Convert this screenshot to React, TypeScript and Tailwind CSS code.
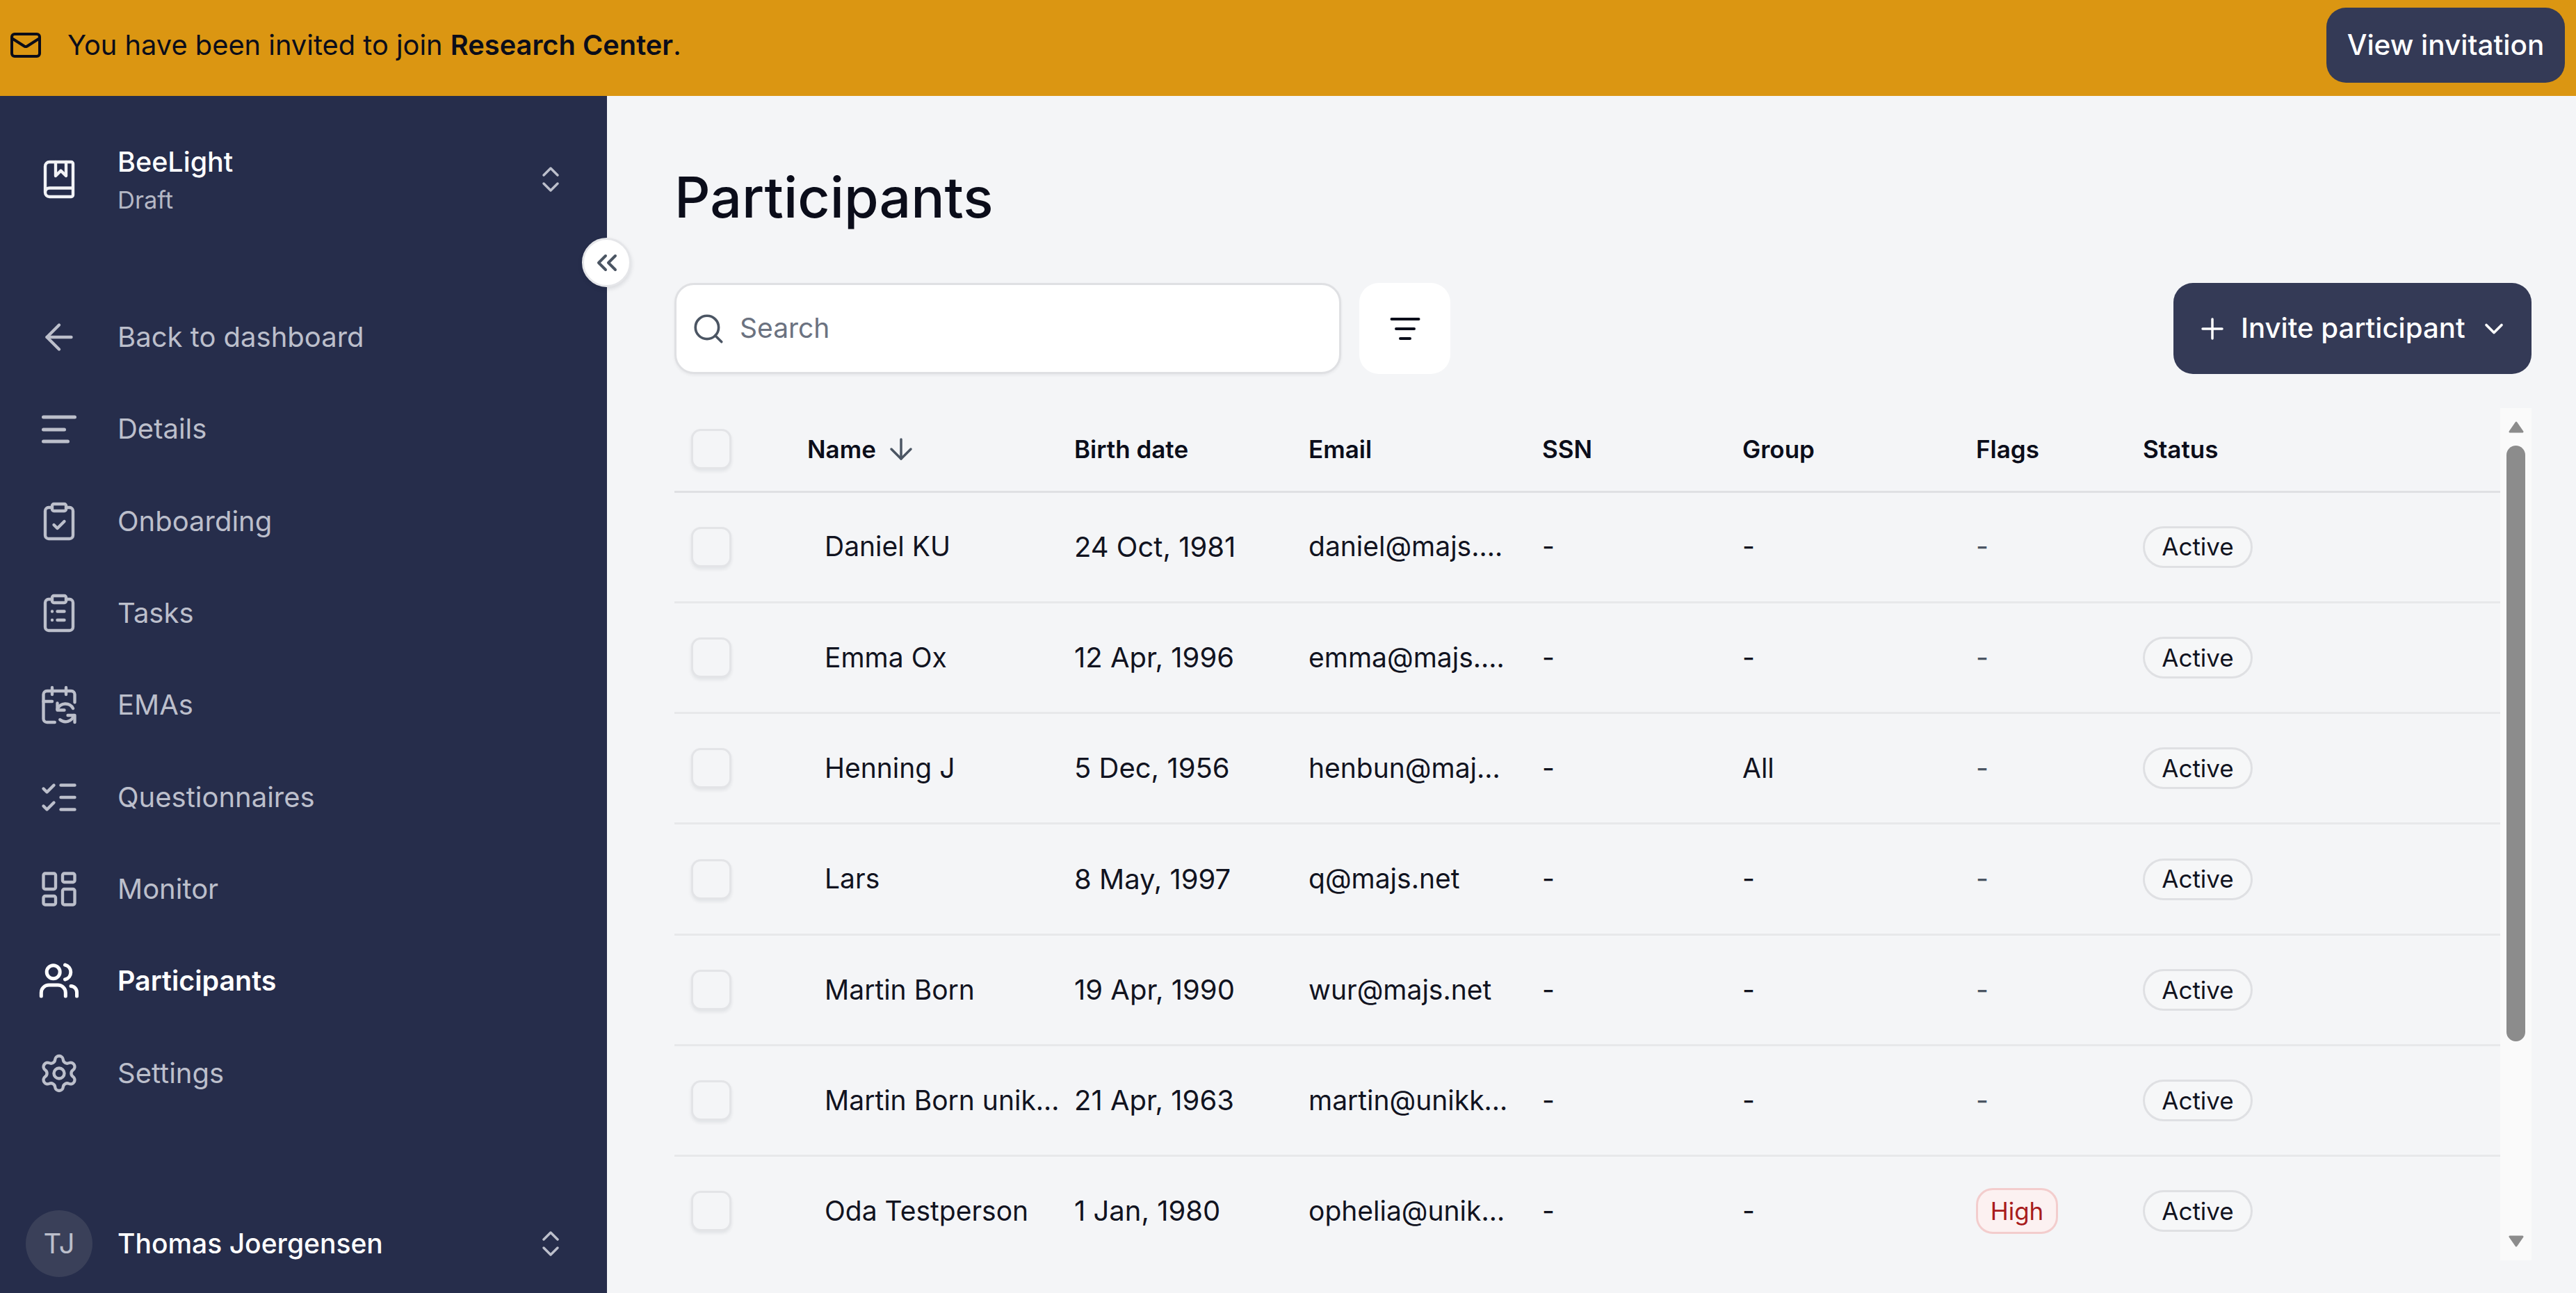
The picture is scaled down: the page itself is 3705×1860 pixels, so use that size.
import {
  ArrowDown,
  ArrowLeft,
  BookMarked,
  ChevronDown,
  ChevronsLeft,
  ChevronsUpDown,
  ClipboardCheck,
  LayoutDashboard,
  ListChecks,
  Mail,
  Plus,
  Search,
  Settings,
} from "lucide-react";
import type { ReactNode } from "react";

const iconClass = "h-[60px] w-[60px] shrink-0";

function DetailsIcon() {
  return (
    <svg viewBox="0 0 60 60" className={iconClass} fill="none" stroke="currentColor" strokeWidth="5" strokeLinecap="round">
      <path d="M7.500 13h45M7.500 31h30M7.500 48h35" />
    </svg>
  );
}

function TasksIcon() {
  return (
    <svg viewBox="0 0 24 24" className={iconClass} fill="none" stroke="currentColor" strokeWidth="1.75" strokeLinecap="round" strokeLinejoin="round">
      <rect x="8" y="2" width="8" height="4" rx="1" />
      <path d="M16 4h2a2 2 0 0 1 2 2v14a2 2 0 0 1-2 2H6a2 2 0 0 1-2-2V6a2 2 0 0 1 2-2h2" />
      <path d="M11 11h4M11 16h4M8 11h.01M8 16h.01" />
    </svg>
  );
}

function EmaIcon() {
  return (
    <svg viewBox="0 0 24 24" className={iconClass} fill="none" stroke="currentColor" strokeWidth="1.75" strokeLinecap="round" strokeLinejoin="round">
      <path d="M8 2v4M16 2v4M3 10h5" />
      <path d="M21 10.500V6a2 2 0 0 0-2-2H5a2 2 0 0 0-2 2v14a2 2 0 0 0 2 2h4.500" />
      <path d="M11 14.500a5 5 0 0 1 9-.5M21 22v-4h-4" />
      <path d="M20.500 18a5 5 0 0 1-8 2.500" />
      <path d="M11 11v4h4" />
    </svg>
  );
}

function PeopleIcon() {
  return (
    <svg viewBox="15 21 60 60" className={iconClass} fill="none" stroke="currentColor" strokeWidth="5" strokeLinecap="round" strokeLinejoin="round">
      <circle cx="36.700" cy="38.300" r="9.500" />
      <path d="M53.500 28a10.800 10.800 0 0 1 0 21" />
      <path d="M19.300 73v-5a11 11 0 0 1 11-11h13a11 11 0 0 1 11 11v5" />
      <path d="M62 58.500a9 9 0 0 1 8.500 9V73" />
    </svg>
  );
}

const navItems: { label: string; icon: ReactNode; active?: boolean }[] = [
  { label: "Back to dashboard", icon: <ArrowLeft className={iconClass} strokeWidth={1.75} /> },
  { label: "Details", icon: <DetailsIcon /> },
  { label: "Onboarding", icon: <ClipboardCheck className={iconClass} strokeWidth={1.75} /> },
  { label: "Tasks", icon: <TasksIcon /> },
  { label: "EMAs", icon: <EmaIcon /> },
  { label: "Questionnaires", icon: <ListChecks className={iconClass} strokeWidth={1.75} /> },
  { label: "Monitor", icon: <LayoutDashboard className={iconClass} strokeWidth={1.75} /> },
  { label: "Participants", icon: <PeopleIcon />, active: true },
  { label: "Settings", icon: <Settings className={iconClass} strokeWidth={1.75} /> },
];

const rows = [
  { name: "Daniel KU", birth: "24 Oct, 1981", email: "daniel@majs.…", group: "-", flag: "-" },
  { name: "Emma Ox", birth: "12 Apr, 1996", email: "emma@majs.…", group: "-", flag: "-" },
  { name: "Henning J", birth: "5 Dec, 1956", email: "henbun@maj…", group: "All", flag: "-" },
  { name: "Lars", birth: "8 May, 1997", email: "q@majs.net", group: "-", flag: "-" },
  { name: "Martin Born", birth: "19 Apr, 1990", email: "wur@majs.net", group: "-", flag: "-" },
  { name: "Martin Born unik…", birth: "21 Apr, 1963", email: "martin@unikk…", group: "-", flag: "-" },
  { name: "Oda Testperson", birth: "1 Jan, 1980", email: "ophelia@unik…", group: "-", flag: "High" },
];

const headCell = "pl-[24px] text-left text-[35px] font-semibold text-[#0b0d1a]";
const bodyCell = "pl-[24px] text-[39px] whitespace-nowrap text-[#11131f]";

function Checkbox() {
  return (
    <div className="h-[58px] w-[58px] rounded-[14px] border-[3px] border-[#e3e4e7] bg-[#f4f5f7] shadow-[0_3px_5px_rgba(16,24,40,0.08)]" />
  );
}

export default function App() {
  return (
    <div className="flex h-[1860px] w-[3705px] flex-col overflow-hidden bg-[#f4f5f7] font-['Inter','Noto_Sans',sans-serif]">
      {/* invitation banner */}
      <div className="flex h-[138px] shrink-0 items-center justify-between bg-[#db9612] pr-[16px] pb-[8px] pl-[13px]">
        <div className="flex items-center gap-[36px] text-[#0b0d1a]">
          <Mail className="h-[48px] w-[48px]" strokeWidth={2} />
          <span className="text-[39.800px]">
            You have been invited to join <b className="font-semibold">Research Center</b>.
          </span>
        </div>
        <button className="h-[108px] w-[343px] rounded-[28px] bg-[#343a56] text-center text-[40.500px] font-medium text-white">
          View invitation
        </button>
      </div>

      <div className="flex min-h-0 flex-1">
        {/* sidebar */}
        <aside className="relative flex w-[873px] shrink-0 flex-col bg-[#262d4b] text-[#bcbfcb]">
          <div className="flex h-[240px] shrink-0 items-center pr-[57px] pl-[55px]">
            <BookMarked className="h-[60px] w-[60px] shrink-0 text-[#f2f3f6]" strokeWidth={1.75} />
            <div className="ml-[54px] flex-1 pt-[7px]">
              <div className="text-[39.500px] leading-[52px] font-medium text-white">BeeLight</div>
              <div className="text-[34.500px] leading-[58px] text-[#b5b8c5]">Draft</div>
            </div>
            <ChevronsUpDown className="h-[48px] w-[48px]" strokeWidth={1.75} />
          </div>

          <button className="absolute top-[204px] left-[837px] flex h-[71px] w-[71px] items-center justify-center rounded-full border-[3px] border-[#e5e6e9] bg-white text-[#4b5563] shadow-[0_3px_6px_rgba(16,24,40,0.12)]">
            <ChevronsLeft className="h-[48px] w-[48px]" strokeWidth={2} />
          </button>

          <nav className="mt-[41px] flex flex-col">
            {navItems.map((item) => (
              <div
                key={item.label}
                className={`flex h-[132.300px] items-center gap-[54px] pl-[55px] ${item.active ? "text-[39.400px] font-semibold text-white" : "text-[40px] text-[#bcbfcb]"}`}
              >
                {item.icon}
                <span>{item.label}</span>
              </div>
            ))}
          </nav>

          <div className="mt-auto mb-[23px] flex items-center pr-[57px] pl-[37px]">
            <div className="flex h-[96px] w-[96px] items-center justify-center rounded-full bg-[#3a4059] text-[40px] text-[#bcbfcb]">
              TJ
            </div>
            <span className="ml-[36px] flex-1 text-[39px] font-medium text-white">Thomas Joergensen</span>
            <ChevronsUpDown className="h-[48px] w-[48px]" strokeWidth={1.75} />
          </div>
        </aside>

        {/* main */}
        <main className="min-w-0 flex-1 pr-[64px] pl-[97px]">
          <h1 className="mt-[80px] h-[132px] text-[80.500px] leading-[132px] font-medium text-[#0b0d1a]">Participants</h1>

          <div className="mt-[57px] flex h-[131px] items-stretch">
            <div className="flex w-[959px] items-center gap-[20px] rounded-[28px] border-[3px] border-[#dfe0e3] bg-white pl-[21px] shadow-[0_2px_4px_rgba(16,24,40,0.06)]">
              <Search className="h-[50px] w-[50px] text-[#4b5563]" strokeWidth={1.75} />
              <span className="text-[39px] text-[#6b7280]">Search</span>
            </div>
            <button className="ml-[26px] flex w-[131px] items-center justify-center rounded-[28px] bg-white">
              <svg viewBox="0 0 56 56" className="h-[56px] w-[56px]" fill="none" stroke="#0b0d1a" strokeWidth="4" strokeLinecap="round">
                <path d="M8.500 14h39M15 28h26M21 42h14" />
              </svg>
            </button>
            <button className="ml-auto flex w-[515px] items-center rounded-[28px] bg-[#343a56] pl-[32px] text-white">
              <Plus className="h-[48px] w-[48px]" strokeWidth={1.75} />
              <span className="ml-[17px] text-[40.200px] font-medium">Invite participant</span>
              <ChevronDown className="mr-[32px] ml-auto h-[44px] w-[44px]" strokeWidth={2} />
            </button>
          </div>

          <div className="mt-[49px] flex h-[1226px] overflow-hidden">
            <table className="h-fit w-[2626px] table-fixed border-collapse">
              <colgroup>
                <col className="w-[167px]" />
                <col className="w-[384px]" />
                <col className="w-[337px]" />
                <col className="w-[336px]" />
                <col className="w-[288px]" />
                <col className="w-[336px]" />
                <col className="w-[240px]" />
                <col className="w-[538px]" />
              </colgroup>
              <thead>
                <tr className="h-[120px] border-b-[3px] border-[#dfe0e3]">
                  <th className="pl-[24px]"><Checkbox /></th>
                  <th className={headCell}>
                    <span className="inline-flex items-center gap-[12px]">
                      Name <ArrowDown className="h-[48px] w-[48px] text-[#4b5563]" strokeWidth={1.75} />
                    </span>
                  </th>
                  <th className={headCell}>Birth date</th>
                  <th className={headCell}>Email</th>
                  <th className={headCell}>SSN</th>
                  <th className={headCell}>Group</th>
                  <th className={headCell}>Flags</th>
                  <th className={headCell}>Status</th>
                </tr>
              </thead>
              <tbody>
                {rows.map((row) => (
                  <tr key={row.name} className="h-[159.300px] border-b-[3px] border-[#e7e8ea]">
                    <td className="pl-[24px]"><Checkbox /></td>
                    <td className={`${bodyCell} pl-[49px]`}>{row.name}</td>
                    <td className={`${bodyCell} text-[40px]`}>{row.birth}</td>
                    <td className={`${bodyCell} text-[39.500px]`}>{row.email}</td>
                    <td className={bodyCell}>-</td>
                    <td className={bodyCell}>{row.group}</td>
                    <td className={bodyCell}>
                      {row.flag === "High" ? (
                        <span className="flex h-[66px] w-[118px] items-center justify-center rounded-[24px] border-[3px] border-[#f3cdcd] bg-[#fcf1f1] text-[35px] text-[#a81c1c]">
                          High
                        </span>
                      ) : (
                        <span className="text-[#4b5563]">-</span>
                      )}
                    </td>
                    <td className={bodyCell}>
                      <span className="flex h-[60px] w-[158px] items-center justify-center rounded-full border-[3px] border-[#dfe0e3] bg-[#f6f7f8] text-[35px] text-[#11131f]">
                        Active
                      </span>
                    </td>
                  </tr>
                ))}
              </tbody>
            </table>

            {/* scrollbar */}
            <div className="flex h-full w-[45px] shrink-0 flex-col items-center bg-[#fafafa]">
              <svg viewBox="0 0 22 17" className="mt-[19px] h-[17px] w-[22px]" fill="#8c8c8c" stroke="#8c8c8c" strokeWidth="3" strokeLinejoin="round">
                <path d="M11 2 20 15H2Z" />
              </svg>
              <div className="mt-[18px] h-[857px] w-[27px] rounded-full bg-[#8c8c8c]" />
              <svg viewBox="0 0 22 17" className="mt-auto mb-[19px] h-[17px] w-[22px]" fill="#8c8c8c" stroke="#8c8c8c" strokeWidth="3" strokeLinejoin="round">
                <path d="M2 2H20L11 15Z" />
              </svg>
            </div>
          </div>
        </main>
      </div>
    </div>
  );
}
